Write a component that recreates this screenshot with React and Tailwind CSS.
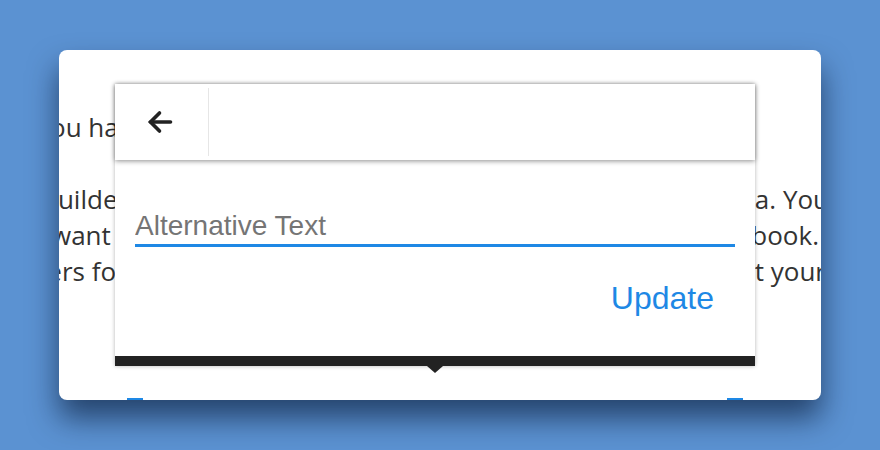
export default function App() {
  return (
    <div className="w-[880px] h-[450px] bg-[#5b92d2] pt-[50px] pl-[59px] overflow-hidden">
      <div className="relative w-[762px] h-[350px] bg-white rounded-[8px] shadow-[0_18px_30px_rgba(0,15,40,0.6)]">
        <div className="h-full overflow-hidden rounded-[8px] pt-[59px] text-[26px] leading-[36px] text-[#333333] font-['Open_Sans',sans-serif]">
          <div className="flex whitespace-nowrap">
            <span className="-ml-[22px]">you have</span>
          </div>
          <div className="mt-[36px] flex justify-between whitespace-nowrap">
            <span className="-ml-[17px]">builder</span>
            <span className="-mr-[8px]">a. You</span>
          </div>
          <div className="flex justify-between whitespace-nowrap">
            <span className="-ml-[8px]">want</span>
            <span className="mr-[2px]">book.</span>
          </div>
          <div className="flex justify-between whitespace-nowrap">
            <span className="-ml-[40px]">users for</span>
            <span className="-mr-[5px]">t your</span>
          </div>
          <div className="mt-[109px] flex justify-between pl-[68px] pr-[78px]">
            <div className="w-4 h-4 bg-[#1e88e5]" />
            <div className="w-4 h-4 bg-[#1e88e5]" />
          </div>
        </div>

        <div className="absolute left-[56px] top-[34px] w-[640px] h-[282px] bg-white flex flex-col shadow-[0_0_4px_rgba(0,0,0,0.3)] font-['Liberation_Sans',Arial,sans-serif]">
          <div className="relative z-10 h-[76px] flex items-stretch bg-white shadow-[0_1px_5px_rgba(0,0,0,0.45)]">
            <button className="w-[93px] pr-[3px] flex items-center justify-center">
              <svg width="26" height="26" viewBox="0 0 26 26" fill="none" stroke="#222222" strokeWidth="3.6" strokeLinecap="round" strokeLinejoin="miter">
                <path d="M3.5 13H23.5" />
                <path d="M12.5 4L3.5 13l9 9" />
              </svg>
            </button>
            <div className="my-[4px] w-px bg-[#e6e6e6]" />
          </div>
          <div className="px-[20px] pt-[51px]">
            <input
              placeholder="Alternative Text"
              className="block w-full h-[30px] box-content pb-[3px] border-b-[3px] border-[#1e88e5] text-[28px] leading-[30px] text-[#333333] outline-none placeholder:text-[#757575]"
            />
          </div>
          <div className="flex justify-end pr-[41px] mt-[33px]">
            <button className="text-[32px] leading-[36px] text-[#1e88e5]">Update</button>
          </div>
          <div className="mt-auto h-[10px] bg-[#222222]" />
          <div className="absolute left-1/2 top-full -translate-x-1/2 w-0 h-0 border-x-[8px] border-x-transparent border-t-[7px] border-t-[#222222]" />
        </div>
      </div>
    </div>
  );
}
